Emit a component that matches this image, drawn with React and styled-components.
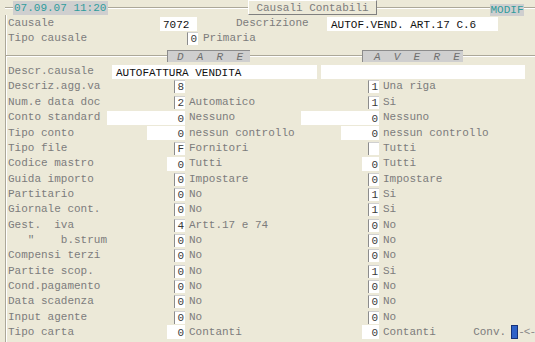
import { Fragment } from 'react';
import styled, { createGlobalStyle } from 'styled-components';

const GlobalStyle = createGlobalStyle`
  html, body {
    margin: 0;
    padding: 0;
    background: #ece9d8;
  }
`

const Screen = styled.div`
  width: 535px;
  height: 342px;
  overflow: hidden;
  background: #ece9d8;
  font-family: "Liberation Mono", "DejaVu Sans Mono", monospace;
  font-size: 11px;
  line-height: 13px;
  color: #7c7c7c;
  white-space: pre;
`

const TopBar = styled.div`
  display: flex;
  align-items: flex-start;
  height: 15px;
  margin-left: 5px;
  background: linear-gradient(
    to bottom,
    transparent 7px,
    #aca899 7px,
    #aca899 8px,
    #ffffff 8px,
    #ffffff 9px,
    transparent 9px
  );
`

const DateTag = styled.div`
  margin-left: 8px;
  margin-top: 1px;
  width: 95px;
  height: 14px;
  line-height: 14px;
  padding-left: 1px;
  box-sizing: border-box;
  background: #cfcfcf;
  color: #2f9c9c;
`

const TitleTag = styled.div`
  margin-left: 140px;
  width: 129px;
  height: 15px;
  line-height: 14px;
  box-sizing: border-box;
  text-align: center;
  background: #ece9d8;
  border-top: 1px solid #ffffff;
  border-left: 1px solid #ffffff;
  border-right: 1px solid #808080;
  border-bottom: 1px solid #808080;
`

const ModeTag = styled.div`
  margin-left: auto;
  margin-right: 11px;
  margin-top: 4px;
  width: 34px;
  height: 12px;
  line-height: 12px;
  text-align: center;
  background: #cfcfcf;
  color: #2f9c9c;
`

const Body = styled.div`
  margin-left: 5px;
  padding-top: 1px;
  padding-left: 2px;
  border-left: 1px solid #aca899;
  box-shadow: inset 1px 0 0 #ffffff;
  height: 327px;
  box-sizing: border-box;
`

const Row = styled.div`
  display: flex;
  align-items: center;
  height: 15px;
`

const Label = styled.div`
  width: ${p => p.$w}px;
  flex: none;
  margin-left: ${p => p.$ml || 0}px;
`

const Field = styled.div`
  flex: none;
  width: ${p => p.$w}px;
  height: ${p => (p.$narrow ? 13 : 14)}px;
  line-height: ${p => (p.$narrow ? 13 : 14)}px;
  box-sizing: border-box;
  background: #ffffff;
  color: ${p => (p.$dark ? '#111111' : '#3a3a3a')};
  text-align: ${p => (p.$left ? 'left' : 'right')};
  padding: ${p => (p.$left ? '0 0 0 3px' : '0 1px 0 0')};
  border-left: 1px solid ${p => (p.$narrow ? '#8c8c8c' : '#ffffff')};
  border-top: 1px solid ${p => (p.$narrow ? '#d0d0d0' : '#ffffff')};
  margin-left: ${p => p.$ml || 0}px;
`

const Text = styled.div`
  margin-left: ${p => p.$ml || 0}px;
`

const Band = styled.div`
  display: flex;
  align-items: flex-start;
  height: 18.3px;
  margin-left: -2px;
  padding-left: 2px;
  background: linear-gradient(
    to bottom,
    transparent 9px,
    #aca899 9px,
    #aca899 10px,
    #ffffff 10px,
    #ffffff 11px,
    transparent 11px
  );
`

const SideTag = styled.div`
  margin-top: 4px;
  margin-left: ${p => p.$ml}px;
  width: ${p => p.$w}px;
  height: 12px;
  line-height: 12px;
  padding-left: ${p => p.$pl}px;
  box-sizing: border-box;
  background: #cfcfcf;
  border-top: 1px solid #8c8c8c;
  border-left: 1px solid #8c8c8c;
  font-style: italic;
  color: #6e6e6e;
`

const Grid = styled.div`
  display: grid;
  grid-template-columns: 96px 81px 107px 87px 1fr;
  grid-auto-rows: 15.35px;
  align-items: center;
`

const Cell = styled.div`
  display: flex;
  align-items: center;
  justify-content: ${p => (p.$end ? 'flex-end' : 'flex-start')};
  padding-left: ${p => (p.$desc ? 4 : 0)}px;
  min-width: 0;
`

const ConvGroup = styled.div`
  display: flex;
  align-items: center;
  margin-left: auto;
`

const ConvMark = styled.div`
  width: 7px;
  height: 14px;
  margin-left: 5px;
  box-sizing: border-box;
  background: #2f62c8;
  border: 1px solid #16327a;
`

const ConvTail = styled.span`
  color: #8a8a8a;
  letter-spacing: -1px;
`

const rows = [
  { label: 'Descriz.agg.va', d: '8', a: '1', aText: 'Una riga' },
  { label: 'Num.e data doc', d: '2', dText: 'Automatico', a: '1', aText: 'Si' },
  { label: 'Conto standard', d: '0', dw: 78, dText: 'Nessuno', a: '0', aw: 78, aText: 'Nessuno' },
  { label: 'Tipo conto', d: '0', dw: 38, dText: 'nessun controllo', a: '0', aw: 38, aText: 'nessun controllo' },
  { label: 'Tipo file', d: 'F', dText: 'Fornitori', a: '', aText: 'Tutti' },
  { label: 'Codice mastro', d: '0', dw: 18, dText: 'Tutti', a: '0', aw: 17, aText: 'Tutti' },
  { label: 'Guida importo', d: '0', dText: 'Impostare', a: '0', aText: 'Impostare' },
  { label: 'Partitario', d: '0', dText: 'No', a: '1', aText: 'Si' },
  { label: 'Giornale cont.', d: '0', dText: 'No', a: '1', aText: 'Si' },
  { label: 'Gest.  iva', d: '4', dText: 'Artt.17 e 74', a: '0', aText: 'No' },
  { label: '   "    b.strum', d: '0', dText: 'No', a: '0', aText: 'No' },
  { label: 'Compensi terzi', d: '0', dText: 'No', a: '0', aText: 'No' },
  { label: 'Partite scop.', d: '0', dText: 'No', a: '1', aText: 'Si' },
  { label: 'Cond.pagamento', d: '0', dText: 'No', a: '0', aText: 'No' },
  { label: 'Data scadenza', d: '0', dText: 'No', a: '0', aText: 'No' },
  { label: 'Input agente', d: '0', dText: 'No', a: '0', aText: 'No' },
  { label: 'Tipo carta', d: '0', dw: 18, dText: 'Contanti', a: '0', aw: 17, aText: 'Contanti', conv: true },
]

const ValueBox = ({ value, width }) => (
  width
    ? <Field $w={width}>{value}</Field>
    : <Field $w={11} $narrow>{value}</Field>
)

export default function App() {
  return (
    <Screen>
      <GlobalStyle />
      <TopBar>
        <DateTag>07.09.07 11:20</DateTag>
        <TitleTag>Causali Contabili</TitleTag>
        <ModeTag>MODIF</ModeTag>
      </TopBar>
      <Body>
        <Row>
          <Label $w={152}>Causale</Label>
          <Field $w={37} $dark>7072 </Field>
          <Label $w={91} $ml={39}>Descrizione</Label>
          <Field $w={171} $left $dark>AUTOF.VEND. ART.17 C.6</Field>
        </Row>
        <Row>
          <Label $w={179}>Tipo causale</Label>
          <Field $w={11} $narrow>0</Field>
          <Text $ml={5}>Primaria</Text>
        </Row>
        <Band>
          <SideTag $ml={159} $w={83} $pl={9}>D  A  R  E</SideTag>
          <SideTag $ml={112} $w={101} $pl={11}>A  V  E  R  E</SideTag>
        </Band>
        <Row>
          <Label $w={104}>Descr.causale</Label>
          <Field $w={205} $left $dark>AUTOFATTURA VENDITA</Field>
          <Field $w={204} $ml={4} $left />
        </Row>
        <Grid>
          {rows.map(r => (
            <Fragment key={r.label}>
              <Cell>{r.label}</Cell>
              <Cell $end>
                <ValueBox value={r.d} width={r.dw} />
              </Cell>
              <Cell $desc>{r.dText || ''}</Cell>
              <Cell $end>
                <ValueBox value={r.a} width={r.aw} />
              </Cell>
              <Cell $desc>
                {r.aText}
                {r.conv && (
                  <ConvGroup>
                    Conv.
                    <ConvMark />
                    <ConvTail>-&lt;-</ConvTail>
                  </ConvGroup>
                )}
              </Cell>
            </Fragment>
          ))}
        </Grid>
      </Body>
    </Screen>
  )
}
